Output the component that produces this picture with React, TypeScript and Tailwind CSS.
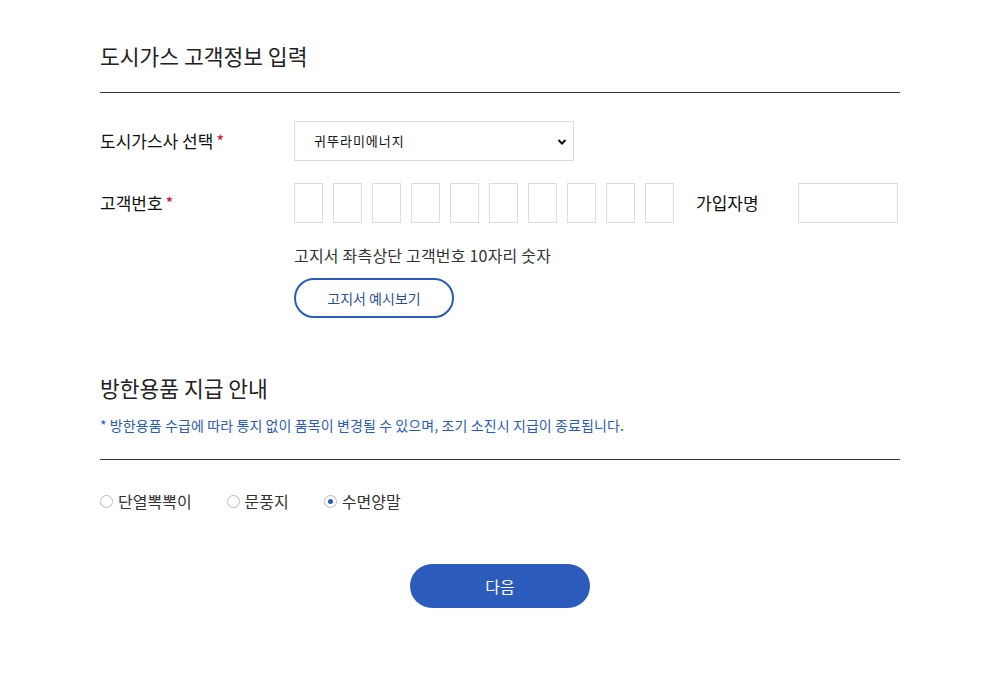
import React, { useState } from 'react';

const font = { fontFamily: '"Noto Sans CJK KR", "Noto Sans", sans-serif' };

const gifts = ['단열뽁뽁이', '문풍지', '수면양말'];

const App: React.FC = () => {
  const [gift, setGift] = useState('수면양말');

  return (
    <div className="min-h-[679px] w-full bg-white text-[#333]" style={font}>
      <div className="ml-[100px] w-[800px] pt-[38px]">
        {/* 고객정보 */}
        <h2 className="text-[21.5px] leading-[36px] font-normal text-[#222] pb-[18px] border-b border-[#333]">
          도시가스 고객정보 입력
        </h2>

        <div className="pt-[28px]">
          <div className="flex items-center h-[40px]">
            <div className="w-[194px] text-[17px] font-normal text-[#111]">
              도시가스사 선택<span className="text-[#d0103a] ml-[3px]">*</span>
            </div>
            <div className="relative w-[280px] h-[40px] border border-[#ddd] bg-white">
              <select
                className="w-full h-full appearance-none bg-transparent pl-[19px] text-[13px] tracking-[1px] text-[#111] outline-none"
                defaultValue="귀뚜라미에너지"
              >
                <option>귀뚜라미에너지</option>
              </select>
              <svg className="absolute right-[6px] top-[16px] pointer-events-none" width="10" height="8" viewBox="0 0 10 8">
                <path d="M1.5 2 L5 5.5 L8.5 2" fill="none" stroke="#111" strokeWidth="2" />
              </svg>
            </div>
          </div>

          <div className="flex items-center h-[40px] mt-[22px]">
            <div className="w-[194px] text-[17px] font-normal text-[#111]">
              고객번호<span className="text-[#d0103a] ml-[3px]">*</span>
            </div>
            <div className="flex gap-[10px]">
              {Array.from({ length: 10 }).map((_, i) => (
                <input key={i} maxLength={1} className="w-[29px] h-[40px] border border-[#ddd] text-center outline-none" />
              ))}
            </div>
            <div className="ml-[22px] w-[102px] text-[17px] font-normal text-[#111]">가입자명</div>
            <input className="w-[100px] h-[40px] border border-[#ddd] outline-none" />
          </div>

          <div className="ml-[194px] mt-[20px]">
            <p className="text-[16px] tracking-[0.2px] leading-[24px] text-[#333]">고지서 좌측상단 고객번호 10자리 숫자</p>
            <button className="mt-[11px] w-[160px] h-[40px] rounded-full border-2 border-[#2b5cb8] text-[14px] text-[#2b4f94]">
              고지서 예시보기
            </button>
          </div>
        </div>

        {/* 방한용품 */}
        <h2 className="mt-[52px] text-[21.5px] leading-[36px] font-normal text-[#222]">방한용품 지급 안내</h2>
        <p className="mt-[9px] text-[14px] tracking-[0.1px] leading-[20px] text-[#2b5cb8] pb-[24px] border-b border-[#333]">
          * 방한용품 수급에 따라 통지 없이 품목이 변경될 수 있으며, 조기 소진시 지급이 종료됩니다.
        </p>

        <div className="flex items-center gap-[35px] mt-[29px]">
          {gifts.map((g) => (
            <label key={g} className="flex items-center gap-[5px] cursor-pointer text-[16px] text-[#333]">
              <span className="w-[13px] h-[13px] rounded-full border border-[#bbb] flex items-center justify-center bg-white">
                {gift === g && <span className="w-[5px] h-[5px] rounded-full bg-[#2b5cb8]" />}
              </span>
              <input type="radio" name="gift" className="hidden" checked={gift === g} onChange={() => setGift(g)} />
              {g}
            </label>
          ))}
        </div>

        <div className="flex justify-center mt-[51px]">
          <button className="w-[180px] h-[44px] rounded-full bg-[#2b5cbd] text-white text-[16px]">다음</button>
        </div>
      </div>
    </div>
  );
};

export default App;
